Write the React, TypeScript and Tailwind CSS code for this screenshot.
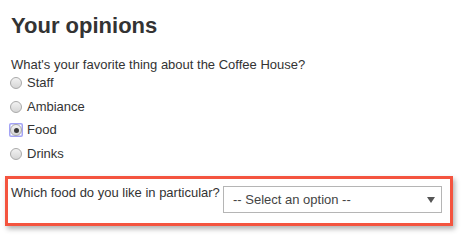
import React from 'react';

const options = ['Staff', 'Ambiance', 'Food', 'Drinks'];

function Radio({ checked }: { checked?: boolean }) {
  return (
    <span
      className={`flex h-[14px] w-[14px] items-center justify-center rounded-[2px] ${
        checked ? 'ring-[1.5px] ring-[#a3a3f5] ring-inset' : ''
      }`}
    >
      <span className="flex h-[12px] w-[12px] items-center justify-center rounded-full border border-[#a9a9a9] bg-gradient-to-b from-[#f2f2f2] to-[#d6d6d6]">
        {checked && <span className="h-[5px] w-[5px] rounded-full bg-[#3a3a3a]" />}
      </span>
    </span>
  );
}

export default function App() {
  return (
    <div
      className="min-h-screen bg-white pl-[5px] pr-[10px] text-[#333]"
      style={{ fontFamily: '"Liberation Sans", Arial, sans-serif' }}
    >
      <div className="pl-[6px]">
        <h1 className="pt-[13px] text-[22px] font-bold leading-[26px]">Your opinions</h1>
        <p className="mt-[18px] text-[13px] leading-[16px]">
          What&apos;s your favorite thing about the Coffee House?
        </p>
        <div className="flex flex-col gap-[3.5px]">
          {options.map((o) => (
            <label key={o} className="-ml-[2px] flex h-[20px] items-center gap-[4px] text-[13px]">
              <Radio checked={o === 'Food'} />
              {o}
            </label>
          ))}
        </div>
      </div>

      <div className="mt-[12.5px] flex h-[50px] border-[3px] border-[#f4543f] pl-[3px] pr-[8px] pt-[7px] shadow-[2px_3px_5px_rgba(0,0,0,0.3)]">
        <span className="-mt-[1px] whitespace-nowrap text-[13px] leading-[16px]">
          Which food do you like in particular?
        </span>
        <div className="ml-auto flex h-[27px] w-[219px] shrink-0 items-center justify-between border border-[#b5b5b5] bg-white pl-[9px] pr-[6px] text-[13px] text-[#444]">
          <span className="mt-[1px]">-- Select an option --</span>
          <svg width="8" height="6" viewBox="0 0 8 6" className="mt-[1px]">
            <path d="M0 0 H8 L4 6 Z" fill="#555" />
          </svg>
        </div>
      </div>
    </div>
  );
}
